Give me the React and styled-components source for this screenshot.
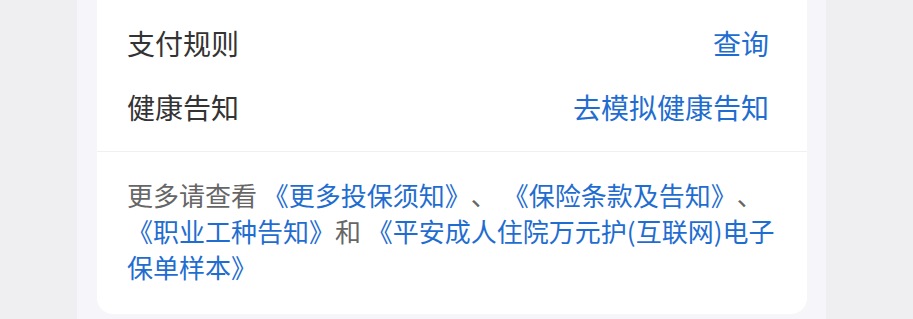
import React from "react";
import styled, { createGlobalStyle } from "styled-components";

const GlobalStyle = createGlobalStyle`
  html, body {
    margin: 0;
    padding: 0;
    background-color: #efeff1;
  }
  body {
    font-family: "Noto Sans CJK SC", "Noto Sans", sans-serif;
    text-spacing-trim: space-all;
  }
`;

const Page = styled.div`
  padding: 0 87px 0 77px;
`;

const Column = styled.div`
  min-height: 319px;
  box-sizing: border-box;
  padding: 0 19px 5px 20px;
  background-color: #f6f6fa;
`;

const Card = styled.div`
  background-color: #fff;
  border-radius: 0 0 16px 16px;
`;

const RowList = styled.div`
  padding: 11px 38px 12px 30px;
`;

const Row = styled.div`
  display: flex;
  align-items: center;
  justify-content: space-between;
  height: 64px;
  font-size: 28px;
`;

const Label = styled.span`
  color: #333;
`;

const Link = styled.a`
  color: ${(p) => p.color || "#1f6dd0"};
  text-decoration: none;
  cursor: pointer;
`;

const Divider = styled.div`
  border-top: 1px solid #f0f0f2;
`;

const Notice = styled.p`
  margin: 0;
  padding: 25px 30px 29px;
  font-size: 26px;
  line-height: 36px;
  color: #666;
  text-spacing-trim: space-all;
`;

const rows = [
  { label: "支付规则", action: "查询" },
  { label: "健康告知", action: "去模拟健康告知" },
];

const App = () => {
  return (
    <Page>
      <GlobalStyle />
      <Column>
        <Card>
          <RowList>
            {rows.map((row) => (
              <Row key={row.label}>
                <Label>{row.label}</Label>
                <Link>{row.action}</Link>
              </Row>
            ))}
          </RowList>
          <Divider />
          <Notice>
            更多请查看 <Link>《更多投保须知》</Link>、{" "}
            <Link>《保险条款及告知》</Link>、<Link>《职业工种告知》</Link>和{" "}
            <Link>《平安成人住院万元护(互联网)电子保单样本》</Link>
          </Notice>
        </Card>
      </Column>
    </Page>
  );
};

export default App;
